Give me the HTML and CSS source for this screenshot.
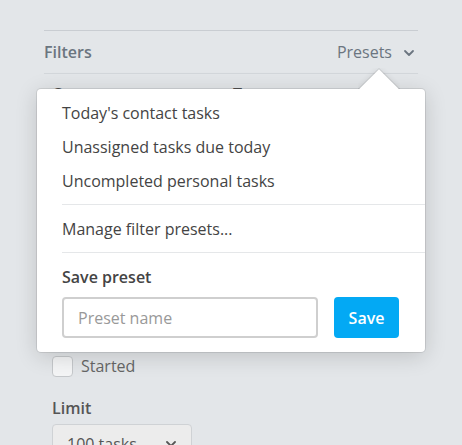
FILE: index.html
```html
<!DOCTYPE html>
<html>
<head>
<meta charset="utf-8">
<link rel="stylesheet" href="styles.css">
</head>
<body>
<div class="panel">
  <div class="panel-head">
    <span class="title">Filters</span>
    <span class="presets">Presets
      <svg class="chev" width="12" height="8" viewBox="0 0 12 8"><path d="M2 2 L6 6 L10 2" fill="none" stroke="#6b7580" stroke-width="1.8" stroke-linecap="round" stroke-linejoin="round"/></svg>
    </span>
  </div>
  <div class="panel-body">
    <div class="cols">
      <div class="col">Owner</div>
      <div class="col">Type</div>
    </div>
    <div class="spacer"></div>
    <label class="check"><span class="box"></span>Started</label>
    <div class="field-label">Limit</div>
    <div class="select"><span>100 tasks</span>
      <svg width="12" height="8" viewBox="0 0 12 8"><path d="M2 2 L6 6 L10 2" fill="none" stroke="#555" stroke-width="1.8" stroke-linecap="round" stroke-linejoin="round"/></svg>
    </div>
  </div>

  <div class="popover">
    <div class="arrow"><span></span></div>
    <div class="pop-inner">
      <ul class="section list">
        <li>Today's contact tasks</li>
        <li>Unassigned tasks due today</li>
        <li>Uncompleted personal tasks</li>
      </ul>
      <ul class="section list">
        <li>Manage filter presets...</li>
      </ul>
      <div class="save">
        <div class="save-title">Save preset</div>
        <div class="save-row">
          <input class="name" type="text" placeholder="Preset name">
          <button class="btn">Save</button>
        </div>
      </div>
    </div>
  </div>
</div>
</body>
</html>
```
FILE: styles.css
```css
* { box-sizing: border-box; }
html, body { margin: 0; padding: 0; }
body {
  background: #e3e6e9;
  font-family: "Open Sans", sans-serif;
  font-size: 16px;
  color: #444;
  height: 445px;
  overflow: hidden;
}
.panel {
  position: relative;
  margin-left: 44px;
  width: 374px;
  padding-top: 30px;
}
.panel-head {
  display: flex;
  justify-content: space-between;
  align-items: center;
  height: 44px;
  border-top: 1px solid #c9cdd2;
  border-bottom: 1px solid #d3d7db;
  color: #6b7580;
  font-size: 16px;
}
.title { font-weight: 600; }
.presets { display: flex; align-items: center; gap: 11px; padding-right: 3px; }
.chev { margin-top: 1px; }
.panel-body { padding-left: 8px; }
.cols { display: flex; padding-top: 9px; height: 30px; color: #555; font-weight: 600; }
.col { width: 181px; }
.spacer { height: 251px; }
.check {
  display: flex;
  align-items: center;
  gap: 8px;
  color: #666;
  height: 22px;
}
.box {
  width: 21px;
  height: 21px;
  border: 1px solid #c5c8cb;
  border-radius: 4px;
  background: #f4f5f6;
}
.field-label {
  margin-top: 19px;
  color: #555;
  font-weight: 600;
  height: 24px;
  line-height: 24px;
}
.select {
  margin-top: 4px;
  width: 140px;
  height: 40px;
  border: 1px solid #cfd2d5;
  border-radius: 4px;
  background: #ececec;
  display: flex;
  justify-content: space-between;
  align-items: center;
  padding: 0 14px;
  color: #555;
}
.popover {
  position: absolute;
  left: -7px;
  top: 89px;
  width: 388px;
}
.arrow {
  position: absolute;
  top: -21px;
  left: 321px;
  width: 42px;
  height: 21px;
  overflow: hidden;
  z-index: 2;
}
.arrow span {
  position: absolute;
  left: 7px;
  top: 7px;
  width: 28px;
  height: 28px;
  background: #fff;
  transform: rotate(45deg);
  box-shadow: 0 0 0 1px rgba(0,0,0,0.08), 0 0 6px rgba(0,0,0,0.1);
}
.pop-inner {
  background: #fff;
  border-radius: 4px;
  box-shadow: 0 0 0 1px rgba(0,0,0,0.09), 0 4px 22px rgba(0,0,0,0.16);
  padding-left: 25px;
}
.section {
  list-style: none;
  margin: 0;
  padding: 7px 0 6px;
  border-bottom: 1px solid #e5e7e9;
}
.section li {
  height: 34px;
  line-height: 34px;
  color: #444;
}
.save { padding: 12px 26px 14px 0; }
.save-title {
  font-weight: 600;
  line-height: 24px;
  color: #444;
}
.save-row {
  display: flex;
  gap: 16px;
  margin-top: 8px;
}
.name {
  width: 256px;
  height: 41px;
  border: 2px solid #cfcfcf;
  border-radius: 4px;
  padding: 0 14px;
  font-family: inherit;
  font-size: 16px;
  color: #444;
  outline: none;
}
.name::placeholder { color: #999; }
.btn {
  width: 65px;
  height: 41px;
  border: 0;
  border-radius: 4px;
  background: #03a9f4;
  color: #fff;
  font-family: inherit;
  font-size: 16px;
  font-weight: 600;
}
```
